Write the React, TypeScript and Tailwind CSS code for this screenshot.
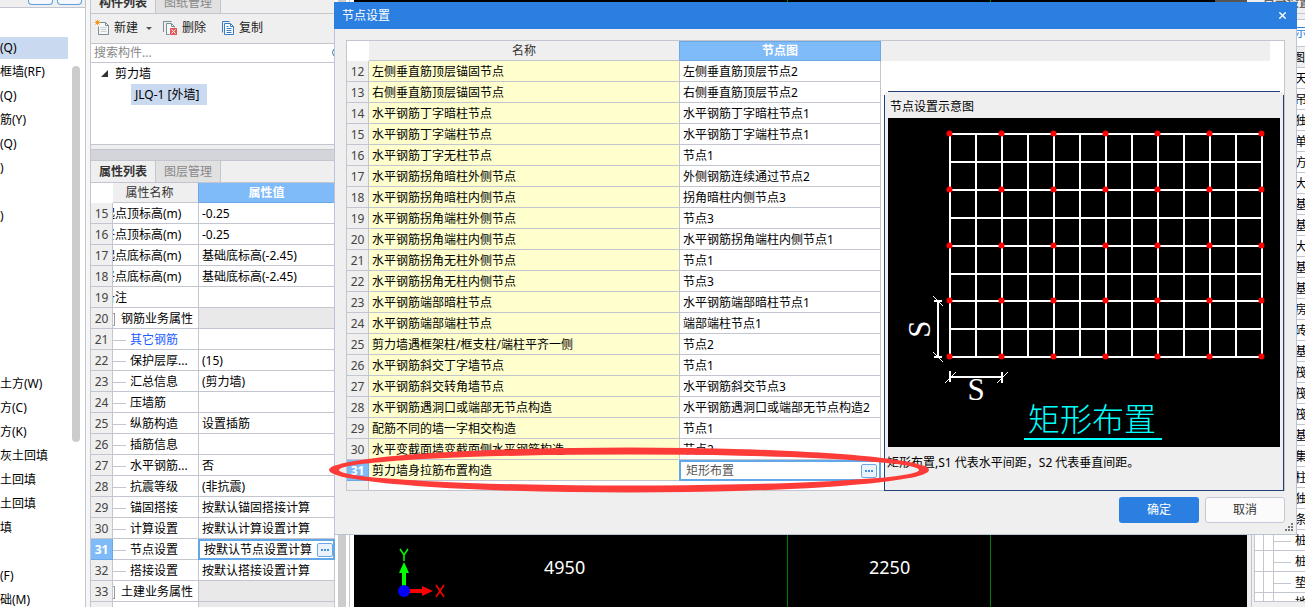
import { Search, X } from "lucide-react";

const navItems = [
  "(Q)", "框墙(RF)", "(Q)", "筋(Y)", "(Q)", ")", "", ")", "", "", "", "", "", "",
  "土方(W)", "方(C)", "方(K)", "灰土回填", "土回填", "土回填", "填", "", "(F)", "础(M)",
];

type Kind = "clip" | "group" | "child" | "link";

const properties: { no: number; name: string; value: string; kind: Kind }[] = [
  { no: 15, name: "起点顶标高(m)", value: "-0.25", kind: "clip" },
  { no: 16, name: "终点顶标高(m)", value: "-0.25", kind: "clip" },
  { no: 17, name: "起点底标高(m)", value: "基础底标高(-2.45)", kind: "clip" },
  { no: 18, name: "终点底标高(m)", value: "基础底标高(-2.45)", kind: "clip" },
  { no: 19, name: "备注", value: "", kind: "clip" },
  { no: 20, name: "钢筋业务属性", value: "", kind: "group" },
  { no: 21, name: "其它钢筋", value: "", kind: "link" },
  { no: 22, name: "保护层厚...", value: "(15)", kind: "child" },
  { no: 23, name: "汇总信息", value: "(剪力墙)", kind: "child" },
  { no: 24, name: "压墙筋", value: "", kind: "child" },
  { no: 25, name: "纵筋构造", value: "设置插筋", kind: "child" },
  { no: 26, name: "插筋信息", value: "", kind: "child" },
  { no: 27, name: "水平钢筋...", value: "否", kind: "child" },
  { no: 28, name: "抗震等级", value: "(非抗震)", kind: "child" },
  { no: 29, name: "锚固搭接", value: "按默认锚固搭接计算", kind: "child" },
  { no: 30, name: "计算设置", value: "按默认计算设置计算", kind: "child" },
  { no: 31, name: "节点设置", value: "按默认节点设置计算", kind: "child" },
  { no: 32, name: "搭接设置", value: "按默认搭接设置计算", kind: "child" },
  { no: 33, name: "土建业务属性", value: "", kind: "group" },
  { no: 34, name: "", value: "", kind: "group" },
];

const nodes: [number, string, string][] = [
  [12, "左侧垂直筋顶层锚固节点", "左侧垂直筋顶层节点2"],
  [13, "右侧垂直筋顶层锚固节点", "右侧垂直筋顶层节点2"],
  [14, "水平钢筋丁字暗柱节点", "水平钢筋丁字暗柱节点1"],
  [15, "水平钢筋丁字端柱节点", "水平钢筋丁字端柱节点1"],
  [16, "水平钢筋丁字无柱节点", "节点1"],
  [17, "水平钢筋拐角暗柱外侧节点", "外侧钢筋连续通过节点2"],
  [18, "水平钢筋拐角暗柱内侧节点", "拐角暗柱内侧节点3"],
  [19, "水平钢筋拐角端柱外侧节点", "节点3"],
  [20, "水平钢筋拐角端柱内侧节点", "水平钢筋拐角端柱内侧节点1"],
  [21, "水平钢筋拐角无柱外侧节点", "节点1"],
  [22, "水平钢筋拐角无柱内侧节点", "节点3"],
  [23, "水平钢筋端部暗柱节点", "水平钢筋端部暗柱节点1"],
  [24, "水平钢筋端部端柱节点", "端部端柱节点1"],
  [25, "剪力墙遇框架柱/框支柱/端柱平齐一侧", "节点2"],
  [26, "水平钢筋斜交丁字墙节点", "节点1"],
  [27, "水平钢筋斜交转角墙节点", "水平钢筋斜交节点3"],
  [28, "水平钢筋遇洞口或端部无节点构造", "水平钢筋遇洞口或端部无节点构造2"],
  [29, "配筋不同的墙一字相交构造", "节点1"],
  [30, "水平变截面墙变截面侧水平钢筋构造", "节点2"],
  [31, "剪力墙身拉筋布置构造", "矩形布置"],
];

const rightRows = [
  "天", "吊", "独", "单", "方", "大", "基", "基", "大", "基", "基", "房", "砖",
  "基", "筏", "筏", "筏", "基", "集", "柱", "独", "条", "桩", "桩", "垫",
];

function MoreButton({ label }: { label: string }) {
  return (
    <button
      type="button"
      aria-label={label}
      className="flex h-[14px] w-4 shrink-0 items-center justify-center gap-px rounded-[2px] border border-[#6aa9e6] bg-[#eaf3fc]"
    >
      <i className="size-[2px] bg-[#4a90d9]" />
      <i className="size-[2px] bg-[#4a90d9]" />
      <i className="size-[2px] bg-[#4a90d9]" />
    </button>
  );
}

function Tabs({ active, other }: { active: string; other: string }) {
  return (
    <div className="flex h-[22px] shrink-0 border-b border-[#c3c6ce] bg-[#efefef] leading-[21px]">
      <button type="button" className="w-16 font-bold text-[#333]">{active}</button>
      <button type="button" className="w-[66px] border-x border-[#c3c6ce] bg-[#e1e1e1] text-[#888]">{other}</button>
    </div>
  );
}

function NewIcon() {
  return (
    <svg className="h-4 w-[15px]" viewBox="0 0 15 16" fill="none">
      <path d="M4.500 2.500h6l3 3v9h-10v-8" stroke="#7d8d94" fill="#f6f8f8" />
      <path d="M10.500 2.500v3h3" stroke="#7d8d94" />
      <path d="M5.500 7.500h6M5.500 9.500h6M5.500 11.500h6" stroke="#c8cfd2" />
      <path d="M2.500 0v5M0 2.500h5M.5.5l4 4M4.500.5l-4 4" stroke="#f39a1d" />
    </svg>
  );
}

function DeleteIcon() {
  return (
    <svg className="h-4 w-[15px]" viewBox="0 0 15 16" fill="none">
      <path d="M.5 12v-10.500h8" stroke="#7d8d94" />
      <path d="M6.500 14.500h-3v-11h5l3 3v1" stroke="#7d8d94" fill="#f6f8f8" />
      <path d="M8.500 3.500v3h3" stroke="#7d8d94" />
      <path d="M7 8h7v7H7z" fill="#e05a5a" />
      <path d="M8.500 9.500l4 4M12.500 9.500l-4 4" stroke="#fff" />
    </svg>
  );
}

function CopyIcon() {
  return (
    <svg className="h-4 w-[13px]" viewBox="0 0 13 16" fill="none">
      <path d="M.5 12.500v-11h7" stroke="#3a7cc4" />
      <path d="M2.500 3.500h6l3 3v8h-9z" stroke="#3a7cc4" fill="#fff" />
      <path d="M8.500 3.500v3h3M4.500 6.500h2M4.500 8.500h5M4.500 10.500h5M4.500 12.500h5" stroke="#3a7cc4" />
    </svg>
  );
}

function NameCell({ name, kind }: { name: string; kind: Kind }) {
  if (kind === "clip") {
    return <div className="w-[84px] overflow-hidden whitespace-nowrap"><span className="-ml-[10px]">{name}</span></div>;
  }
  if (kind === "group") {
    return (
      <div className="flex w-[84px] items-center gap-[6px] overflow-hidden whitespace-nowrap">
        <span className="h-[13px] w-[2px] shrink-0 border-y border-r border-[#999]" />
        {name}
      </div>
    );
  }
  return (
    <div className="flex items-center gap-1 whitespace-nowrap">
      <span className="h-px w-[13px] shrink-0 bg-[#c3c6ce]" />
      <span className={kind === "link" ? "text-[#1b5cff]" : "text-black"}>{name}</span>
    </div>
  );
}

function Diagram() {
  const columns = Array.from({ length: 13 }, (_, i) => 62 + i * 26);
  const lines = [16, 44, 72, 100, 128, 156, 183, 211, 239];
  return (
    <svg className="mx-[3px] block h-[329px] bg-black" viewBox="0 0 392 329" role="img" aria-label="矩形布置">
      <g stroke="#fff" strokeWidth="2" shapeRendering="crispEdges">
        {columns.map((x) => <line key={x} x1={x} x2={x} y1={15} y2={240} />)}
        {lines.map((y) => <line key={y} x1={61} x2={375} y1={y} y2={y} />)}
        <path d="M50 183v56M46 183h8M46 239h8M62 259h52M62 253v11M114 254v11" />
      </g>
      <path d="M45 178l10 10M45 234l10 10M57 265l11-11M109 265l11-11" stroke="#fff" />
      <g fill="#f00">
        {lines.filter((_, i) => i % 2 === 0).map((y) =>
          columns.filter((_, i) => i % 2 === 0).map((x) => (
            <circle key={`${x}-${y}`} cx={x - 0.5} cy={y - 0.5} r={3} />
          )),
        )}
      </g>
      <g fill="#fff" fontFamily="Liberation Serif, serif" fontSize="31" textAnchor="middle">
        <text x="88" y="282">S</text>
        <text x="0" y="0" transform="translate(42 211) rotate(-90)">S</text>
      </g>
      <text x="140" y="313" fill="#0ff" fontSize="32" fontWeight="300" fontFamily="Noto Sans CJK SC, sans-serif">矩形布置</text>
      <path d="M136 321h138" stroke="#0ff" strokeWidth="2" />
    </svg>
  );
}

function Sidebar() {
  return (
    <nav className="flex w-[86px] shrink-0 flex-col border-r border-[#c3c6ce] bg-white">
      <div className="flex h-2 shrink-0 items-start gap-1 border-b border-[#c3c6ce] bg-[#efefef] pl-7">
        <span className="h-[5px] w-[25px] rounded-b border border-t-0 border-[#5b9fe0] bg-[#f5f8fc]" />
        <span className="h-[5px] w-[25px] rounded-b border border-t-0 border-[#5b9fe0] bg-[#f5f8fc]" />
      </div>
      <div className="flex pt-[28px]">
        <ul className="w-[68px]">
          {navItems.map((item, i) => (
            <li key={i} className="flex h-6 items-center whitespace-nowrap">
              <span className={i === 0 ? "h-[22px] w-full bg-[#c9d9ef] leading-[22px]" : ""}>{item}</span>
            </li>
          ))}
        </ul>
        <div className="mt-[30px] ml-1 h-[376px] w-2 rounded-full bg-[#ccc]" />
      </div>
    </nav>
  );
}

function ComponentPanel() {
  return (
    <section className="flex w-[245px] shrink-0 flex-col border-l border-[#c3c6ce] bg-[#efefef]">
      <div className="flex h-[14px] shrink-0 flex-col justify-end overflow-hidden">
        <Tabs active="构件列表" other="图纸管理" />
      </div>
      <div className="flex h-[30px] shrink-0 items-center border-b border-[#c3c6ce] pb-px pl-1 text-[#222]">
        <button type="button" className="flex items-center gap-1"><NewIcon />新建</button>
        <span className="ml-2 border-x-[3px] border-t-[3px] border-x-transparent border-t-[#555]" />
        <button type="button" className="ml-[11px] flex items-center gap-1"><DeleteIcon />删除</button>
        <button type="button" className="ml-4 flex items-center gap-1"><CopyIcon />复制</button>
      </div>
      <div className="flex h-[19px] shrink-0 items-center border-b border-[#c3c6ce] bg-white pl-[3px]">
        <input aria-label="搜索构件" placeholder="搜索构件..." className="min-w-0 flex-1 outline-none placeholder:text-[#888]" />
        <Search className="-mr-2 size-3 text-[#2b7fb3]" />
      </div>
      <div className="h-[82px] shrink-0 border-b border-[#c3c6ce] bg-white">
        <div className="flex h-[21px] items-center gap-[7px] pl-[10px]">
          <svg className="size-[7px]" viewBox="0 0 7 7"><path d="M7 0v7H0z" fill="#333" /></svg>
          剪力墙
        </div>
        <span className="ml-10 inline-block h-[21px] w-[76px] bg-[#c9d9ef] px-1 leading-[21px]">JLQ-1 [外墙]</span>
      </div>
      <div className="mt-1 h-3 shrink-0 border-y border-[#c3c6ce] bg-[#d3d5da]" />
      <Tabs active="属性列表" other="图层管理" />
      <table className="w-full table-fixed border-separate border-spacing-0 bg-white">
        <colgroup>
          <col className="w-[22px]" />
          <col className="w-[86px]" />
          <col />
        </colgroup>
        <thead>
          <tr className="h-5">
            <th className="bg-white p-0" />
            <th className="border-r border-b border-r-[#6aa9e6] border-b-[#c3c6ce] bg-[#efefef] p-0 pt-px pr-3 font-normal text-[#333]">属性名称</th>
            <th className="border-r border-b border-[#6aa9e6] bg-[#80bbf9] p-0 pt-px text-white">属性值</th>
          </tr>
        </thead>
        <tbody>
          {properties.map((row) => {
            const selected = row.no === 31;
            return (
              <tr key={row.no} className="h-[21px]">
                <td className={selected
                  ? "border-r border-b border-[#6aa9e6] bg-[#80bbf9] p-0 pt-0.5 text-center font-bold text-white"
                  : "border-r border-b border-[#c3c6ce] bg-[#efefef] p-0 pt-0.5 text-center text-[#444]"}>{row.no}</td>
                <td className="border-r border-b border-[#c3c6ce] p-0 pt-0.5"><NameCell name={row.name} kind={row.kind} /></td>
                {selected ? (
                  <td className="p-0">
                    <div className="-ml-px flex h-[21px] items-center border-2 border-[#62a7e8] bg-white pl-1">
                      <input aria-label={row.name} defaultValue={row.value} className="w-0 min-w-0 flex-1 outline-none" />
                      <MoreButton label="更多节点设置" />
                    </div>
                  </td>
                ) : (
                  <td className={row.kind === "group"
                    ? "border-r border-b border-[#c3c6ce] bg-[#e9e9e9] p-0"
                    : "border-r border-b border-[#c3c6ce] p-0 pt-0.5 pl-[3px] whitespace-nowrap"}>{row.value}</td>
                )}
              </tr>
            );
          })}
        </tbody>
      </table>
    </section>
  );
}

function Canvas() {
  return (
    <main className="relative min-w-0 flex-1 overflow-hidden bg-black text-white">
      <div className="flex h-[2px] justify-end"><span className="w-8 bg-[#555]" /></div>
      <div className="absolute inset-y-0 left-[433px] w-px bg-[#008000]" />
      <div className="absolute inset-y-0 left-[636px] w-px bg-[#008000]" />
      <span className="absolute top-[555px] left-[190px] text-[18px] leading-6">4950</span>
      <span className="absolute top-[555px] left-[515px] text-[18px] leading-6">2250</span>
      <svg className="absolute top-[545px] left-[40px] h-[56px] w-[54px]" viewBox="0 0 54 56">
        <path d="M8 42V28H5L10 17l5 11h-3v14z" fill="#0f0" />
        <path d="M14 44h14v-3l11 5-11 5v-3H14z" fill="#f00" />
        <circle cx="10" cy="46" r="6" fill="#00f" />
        <path d="M6 4l4 6 4-6M10 10v6" stroke="#0f0" strokeWidth="1.500" fill="none" />
        <path d="M42 40l8 12M50 40l-8 12" stroke="#f00" strokeWidth="1.500" />
      </svg>
    </main>
  );
}

function RightPanel() {
  return (
    <aside className="flex w-[58px] shrink-0 flex-col overflow-hidden bg-[#efefef]">
      <div className="flex h-[14px] shrink-0 items-end border-b border-[#c3c6ce] pl-4 leading-[21px] font-bold whitespace-nowrap text-[#666]">目录设置</div>
      <div className="mt-[5px] flex h-[28px] shrink-0 items-center border-y border-[#c3c6ce] bg-white pl-12 whitespace-nowrap text-[#2b7fe3]">示</div>
      <div className="ml-1 flex-1 border-l border-[#c3c6ce] pl-[2px]">
        <table className="w-full table-fixed border-separate border-spacing-0 border-l border-[#c3c6ce] bg-white">
          <colgroup>
            <col className="w-[9px]" />
            <col className="w-[10px]" />
            <col />
          </colgroup>
          <thead>
            <tr className="h-[21px]">
              <th colSpan={3} className="border-b border-[#c3c6ce] bg-[#efefef] p-0 pt-0.5 pl-[38px] text-left font-normal">图</th>
            </tr>
          </thead>
          <tbody>
            {rightRows.map((name, i) => (
              <tr key={i} className="h-[21px]">
                <td className="border-r border-b border-[#c3c6ce] p-0" />
                <td className="border-r border-b border-[#c3c6ce] p-0" />
                <td className="border-b border-[#c3c6ce] p-0 pt-0.5">
                  <div className="flex items-center gap-1 overflow-hidden">
                    <span className="h-px w-[17px] shrink-0 bg-[#c3c6ce]" />
                    <span className="shrink-0">{name}</span>
                  </div>
                </td>
              </tr>
            ))}
            <tr className="h-[9px]">
              <td className="border-r border-b border-[#c3c6ce] p-0" />
              <td className="border-r border-b border-[#c3c6ce] p-0" />
              <td className="border-b border-[#c3c6ce] p-0">
                <div className="h-2 overflow-hidden pl-[21px] leading-[20px]">地</div>
              </td>
            </tr>
          </tbody>
        </table>
      </div>
    </aside>
  );
}

function NodeDialog() {
  return (
    <div role="dialog" aria-label="节点设置" className="absolute top-[2px] right-2 left-[334px] border-x border-b border-[#bcc3d6] bg-[#efefef]">
      <header className="-mx-px flex h-[27px] items-center justify-between bg-[#2b7fe1] pr-[9px] pl-2 text-white">
        <h1>节点设置</h1>
        <button type="button" aria-label="关闭"><X className="size-[11px]" strokeWidth={3} /></button>
      </header>
      <div className="mt-[11px] mr-[11px] ml-[11px] flex h-[451px] border border-[#c3c6ce] bg-white">
        <div className="flex w-[534px] shrink-0 flex-col">
          <table className="w-full table-fixed border-separate border-spacing-0">
            <colgroup>
              <col className="w-[22px]" />
              <col />
              <col className="w-[201px]" />
            </colgroup>
            <thead>
              <tr className="h-5">
                <th className="p-0" />
                <th className="border-r border-b border-r-[#6aa9e6] border-b-[#c3c6ce] bg-[#efefef] p-0 pt-px font-normal text-[#333]">名称</th>
                <th className="border-y border-r border-[#6aa9e6] bg-[#80bbf9] p-0 text-white">节点图</th>
              </tr>
            </thead>
            <tbody>
              {nodes.map(([no, name, value]) => {
                const selected = no === 31;
                return (
                  <tr key={no} className="h-[21px]">
                    <td className={selected
                      ? "border-r border-b border-[#6aa9e6] bg-[#80bbf9] p-0 pt-0.5 text-center font-bold text-white"
                      : "border-r border-b border-[#c3c6ce] bg-[#efefef] p-0 pt-0.5 text-center text-[#444]"}>{no}</td>
                    <td className="border-r border-b border-[#c3c6ce] bg-[#ffffcd] p-0 pt-0.5 pl-[3px] whitespace-nowrap">{name}</td>
                    {selected ? (
                      <td className="p-0">
                        <div className="-ml-px flex h-[21px] items-center border-2 border-[#62a7e8] bg-white pr-[2px] pl-[5px]">
                          <input aria-label={name} defaultValue={value} className="w-0 min-w-0 flex-1 text-[#555] outline-none" />
                          <MoreButton label="选择节点" />
                        </div>
                      </td>
                    ) : (
                      <td className="border-r border-b border-[#c3c6ce] p-0 pt-0.5 pl-[3px] whitespace-nowrap">{value}</td>
                    )}
                  </tr>
                );
              })}
            </tbody>
          </table>
          <div className="w-[22px] flex-1 border-r border-[#c3c6ce] bg-[#efefef]" />
        </div>
        <div className="-mb-px flex min-w-0 flex-1 flex-col">
          <div className="mr-[14px] h-5 bg-[#efefef]" />
          <section className="mt-[30px] ml-[3px] flex flex-1 flex-col">
            <div className="mx-1 h-px bg-[#1f3f77]" />
            <div className="h-[3px] rounded-t-[3px] bg-[#efefef]" />
            <div className="flex-1 border-x border-b border-[#1f3f77] bg-[#efefef]">
              <h2 className="h-[23px] pl-[5px] leading-6">节点设置示意图</h2>
              <Diagram />
              <p className="pt-[6px] pl-[2px] leading-5 whitespace-nowrap">矩形布置,S1 代表水平间距，S2 代表垂直间距。</p>
            </div>
          </section>
        </div>
      </div>
      <footer className="flex h-[43px] justify-end gap-[6px] pt-[6px] pr-[11px]">
        <button type="button" className="h-[26px] w-20 rounded-[3px] bg-[#2b7fe1] text-white">确定</button>
        <button type="button" className="h-[26px] w-20 rounded-[3px] border border-[#c3c9d8] bg-[#fbfbfb] text-[#333]">取消</button>
      </footer>
      <svg className="absolute right-[3px] bottom-[3px] size-2" viewBox="0 0 8 8" fill="#777">
        <path d="M6 0h2v2H6zM3 3h2v2H3zM6 3h2v2H6zM0 6h2v2H0zM3 6h2v2H3zM6 6h2v2H6z" />
      </svg>
      <svg className="pointer-events-none absolute top-[445px] -left-[6px] h-[46px] w-[600px]" viewBox="0 0 600 46">
        <path
          fillRule="evenodd"
          fill="#fd3b38"
          d="M0 23a300 22.500 0 1 0 600 0a300 22.500 0 1 0-600 0zM10 23a290 15.500 0 1 1 580 0a290 15.500 0 1 1-580 0z"
        />
      </svg>
    </div>
  );
}

export default function App() {
  return (
    <div className="relative flex h-screen overflow-hidden bg-[#f6f6f6] font-['Noto_Sans','Noto_Sans_CJK_SC',sans-serif] text-[12px] leading-[18px] text-black">
      <Sidebar />
      <div className="w-1 shrink-0" />
      <ComponentPanel />
      <div className="flex w-[19px] shrink-0 bg-white pl-[3px]">
        <div className="w-2 bg-[#ccc]" />
        <div className="ml-[3px] w-px bg-[#c3c6ce]" />
      </div>
      <Canvas />
      <RightPanel />
      <NodeDialog />
    </div>
  );
}
